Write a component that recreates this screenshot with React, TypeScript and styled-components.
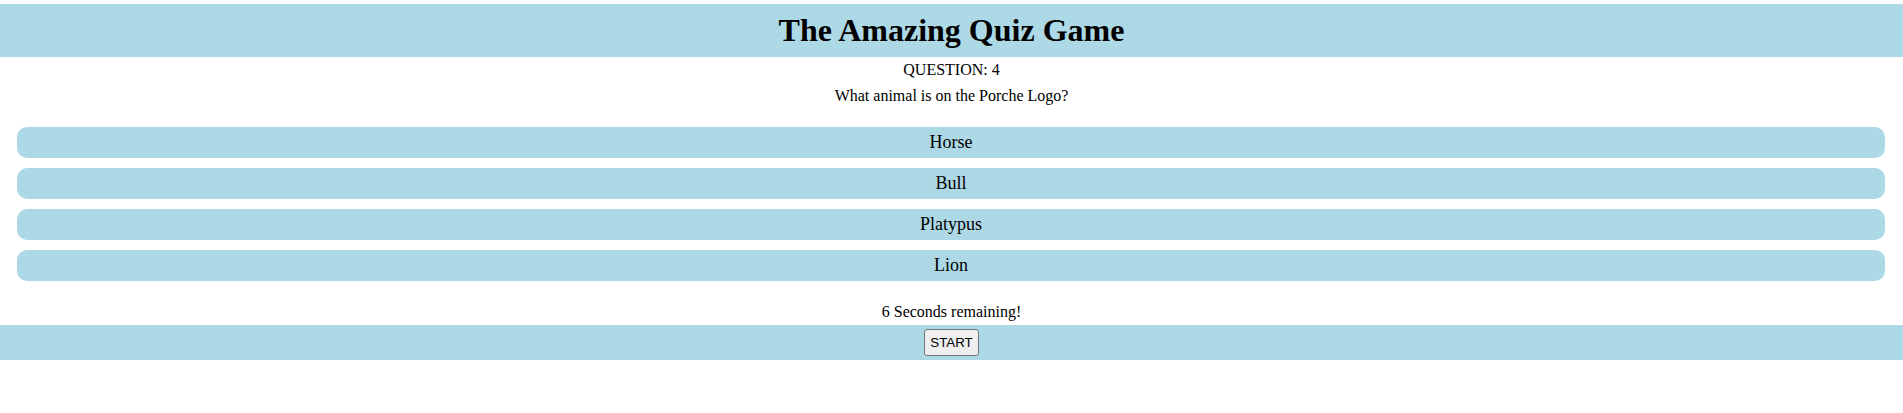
import styled, { createGlobalStyle } from "styled-components";

const GlobalStyle = createGlobalStyle`
  body {
    margin: 0;
    background: #ffffff;
    color: #000000;
    font-family: "Liberation Serif", "Times New Roman", serif;
  }
`;

const Page = styled.div`
  display: flex;
  flex-direction: column;
  padding-top: 4px;
`;

const Header = styled.header`
  background-color: lightblue;
  padding: 8px 0;
  text-align: center;

  h1 {
    margin: 0;
    font: 700 32px "Liberation Serif", serif;
  }
`;

const QuestionArea = styled.div`
  display: flex;
  flex-direction: column;
  align-items: center;
  padding-top: 4px;
  font-size: 16px;

  p {
    margin: 0;
  }

  .prompt {
    margin-top: 8px;
  }
`;

const AnswerList = styled.div`
  display: flex;
  flex-direction: column;
  gap: 10px;
  padding: 0 18px 0 17px;
  margin-top: 22px;
`;

const Answer = styled.div`
  display: flex;
  align-items: center;
  justify-content: center;
  height: 31px;
  background-color: lightblue;
  border-radius: 10px;
  font-size: 18px;
  cursor: pointer;
`;

const Timer = styled.p`
  margin: 22px 0 4px;
  text-align: center;
  font-size: 16px;
`;

const Footer = styled.footer`
  display: flex;
  justify-content: center;
  padding: 4px 0;
  background-color: lightblue;
`;

const StartButton = styled.button`
  font: 400 13.3333px "Liberation Sans", Arial, sans-serif;
  color: #000000;
  background-color: #efefef;
  border: 1px solid #767676;
  border-radius: 3px;
  padding: 5px 5px;
  line-height: normal;
`;

const answers = ["Horse", "Bull", "Platypus", "Lion"];

const App = (): React.ReactElement => (
  <>
    <GlobalStyle />
    <Page>
      <Header>
        <h1>The Amazing Quiz Game</h1>
      </Header>
      <QuestionArea>
        <p>QUESTION: 4</p>
        <p className="prompt">What animal is on the Porche Logo?</p>
      </QuestionArea>
      <AnswerList>
        {answers.map((a) => (
          <Answer key={a}>{a}</Answer>
        ))}
      </AnswerList>
      <Timer>6 Seconds remaining!</Timer>
      <Footer>
        <StartButton>START</StartButton>
      </Footer>
    </Page>
  </>
);

export default App;
